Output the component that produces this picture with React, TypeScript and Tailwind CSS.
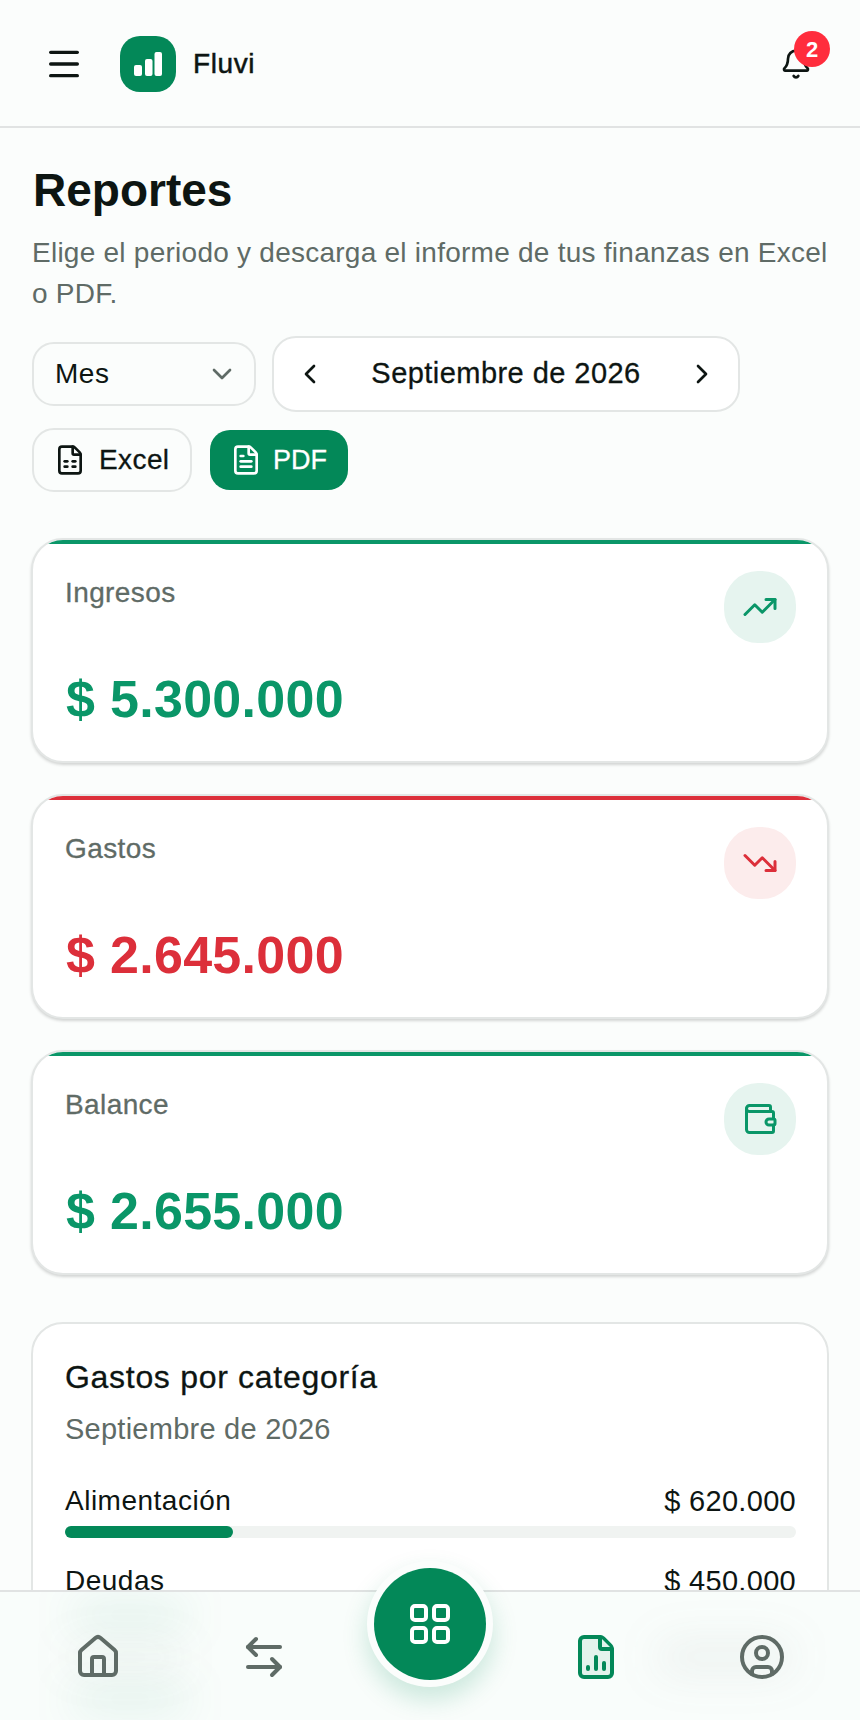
import { Menu, Bell, ChevronDown, ChevronLeft, ChevronRight, FileSpreadsheet, FileText, TrendingUp, TrendingDown, Wallet, House, ArrowLeftRight, FileChartColumn, CircleUser } from "lucide-react";
import type { ReactNode } from "react";

function StatCard({ label, value, top, tint, color, icon }: { label: string; value: string; top: string; tint: string; color: string; icon: ReactNode }) {
  return (
    <section className="relative -mx-[1px] h-[225px] overflow-hidden rounded-[32px] border-2 border-[#e3e6e5] bg-white shadow-[0_2px_3px_rgba(0,0,0,0.16)]">
      <div className={`h-[4px] ${top}`} />
      <div className="flex items-start justify-between pl-[32px] pr-[31px] pt-[27px]">
        <span className="pt-[4px] text-[28px] leading-[36px] tracking-[0.4px] text-[#5f6b66] [-webkit-text-stroke:0.3px]">{label}</span>
        <div className={`flex h-[72px] w-[72px] items-center justify-center rounded-[34px] ${tint}`}>{icon}</div>
      </div>
      <div className={`pl-[33px] pt-[25px] text-[52px] leading-[62px] font-bold tracking-[0.3px] ${color}`}>{value}</div>
    </section>
  );
}

function Row({ name, amount, width }: { name: string; amount: string; width: string }) {
  return (
    <div className="h-[80px]">
      <div className="flex justify-between text-[28px] leading-[40px] text-[#0d1512]">
        <span className="tracking-[0.5px]">{name}</span>
        <span className="text-[29px] tracking-[0.3px]">{amount}</span>
      </div>
      <div className="mt-[5px] h-[12px] rounded-full bg-[#f0f3f1]">
        <div className={`h-full rounded-full bg-[#038858] ${width}`} />
      </div>
    </div>
  );
}

export default function App() {
  return (
    <div className="relative h-[1720px] w-[860px] overflow-hidden bg-[#fbfdfc] font-['Liberation_Sans',sans-serif] text-[#0d1512]">
      <header className="flex h-[128px] items-center justify-between border-b-2 border-[#e1e3e3] pl-[44px] pr-[46px] pt-[2px]">
        <div className="flex items-center">
          <Menu size={40} strokeWidth={2} className="text-[#0d1512]" />
          <div className="ml-[36px] flex h-[56px] w-[56px] items-center justify-center rounded-[20px] bg-[#038858]">
            <svg width="28" height="24" viewBox="0 0 28 24" fill="#fff">
              <rect x="0" y="13" width="8" height="11" rx="2" />
              <rect x="11" y="7" width="7.5" height="17" rx="2" />
              <rect x="20.5" y="0" width="7.5" height="24" rx="2" />
            </svg>
          </div>
          <span className="ml-[17px] text-[28px] tracking-[0.6px] [-webkit-text-stroke:0.5px]">Fluvi</span>
        </div>
        <div className="relative flex h-[36px] w-[36px] items-center justify-center">
          <Bell size={32} strokeWidth={2} />
          <span className="absolute -right-[16px] -top-[15px] flex h-[36px] w-[36px] items-center justify-center rounded-full bg-[#ff2d3d] text-[22px] font-bold text-white">2</span>
        </div>
      </header>

      <main className="px-[32px] pt-[32px]">
        <h1 className="ml-[1px] text-[46px] leading-[60px] font-bold text-[#0d1512]">Reportes</h1>
        <p className="mt-[12px] text-[28px] leading-[41px] tracking-[0.25px] text-[#5f6b66]">Elige el periodo y descarga el informe de tus finanzas en Excel o PDF.</p>

        <div className="mt-[22px] flex items-center gap-[16px]">
          <div className="flex h-[64px] w-[224px] items-center justify-between rounded-[22px] border-2 border-[#e3e6e5] pl-[21px] pr-[16px] text-[28px] tracking-[0.5px]">
            <span>Mes</span>
            <ChevronDown size={32} strokeWidth={2} className="text-[#5f6b66]" />
          </div>
          <div className="flex h-[76px] w-[468px] items-center justify-between rounded-[24px] border-2 border-[#e3e6e5] bg-white px-[20px] text-[29px] tracking-[0.45px] [-webkit-text-stroke:0.3px]">
            <ChevronLeft size={32} strokeWidth={2} />
            <span>Septiembre de 2026</span>
            <ChevronRight size={32} strokeWidth={2} />
          </div>
        </div>

        <div className="mt-[16px] flex items-center gap-[18px]">
          <div className="flex h-[64px] w-[160px] items-center gap-[13px] rounded-[22px] border-2 border-[#e3e6e5] pl-[20px] text-[28px] tracking-[0.4px] [-webkit-text-stroke:0.3px]">
            <FileSpreadsheet size={32} strokeWidth={2} />
            <span>Excel</span>
          </div>
          <div className="flex h-[60px] w-[138px] items-center gap-[11px] rounded-[20px] bg-[#038858] pl-[20px] text-[27px] text-white [-webkit-text-stroke:0.3px]">
            <FileText size={32} strokeWidth={2} />
            <span>PDF</span>
          </div>
        </div>

        <div className="mt-[46px] flex flex-col gap-[31px]">
          <StatCard label="Ingresos" value="$ 5.300.000" top="bg-[#0a9668]" tint="bg-[#e6f4ef]" color="text-[#0a9668]" icon={<TrendingUp size={36} strokeWidth={2} className="text-[#0a9668]" />} />
          <StatCard label="Gastos" value="$ 2.645.000" top="bg-[#dc2f3a]" tint="bg-[#fcecec]" color="text-[#dc2f3a]" icon={<TrendingDown size={36} strokeWidth={2} className="text-[#dc2f3a]" />} />
          <StatCard label="Balance" value="$ 2.655.000" top="bg-[#0a9668]" tint="bg-[#e6f4ef]" color="text-[#0a9668]" icon={<Wallet size={36} strokeWidth={2} className="text-[#0a9668]" />} />
        </div>

        <section className="-mx-[1px] mt-[47px] rounded-[32px] border-2 border-[#e3e6e5] bg-white pb-[32px] pl-[32px] pr-[31px] pt-[33px]">
          <h2 className="text-[32px] leading-[40px] tracking-[0.7px] [-webkit-text-stroke:0.3px]">Gastos por categoría</h2>
          <p className="mt-[12px] text-[29px] leading-[40px] tracking-[0.25px] text-[#5f6b66]">Septiembre de 2026</p>
          <div className="mt-[32px]">
            <Row name="Alimentación" amount="$ 620.000" width="w-[23%]" />
            <Row name="Deudas" amount="$ 450.000" width="w-[17%]" />
          </div>
        </section>
      </main>

      <nav className="absolute inset-x-0 bottom-0 grid h-[130px] grid-cols-5 items-center justify-items-center overflow-hidden border-t-2 border-[#e1e3e3] bg-[#f9fdfb] px-[15px] pt-[2px]">
        <div className="absolute left-[70px] top-[8px] h-[30px] w-[120px] rounded-full bg-[#038858]/9 blur-[22px]" />
        <div className="absolute left-[65px] top-[50px] h-[30px] w-[120px] rounded-full bg-[#5f6b66]/6 blur-[22px]" />
        <div className="absolute left-[70px] top-[92px] h-[30px] w-[120px] rounded-full bg-[#038858]/9 blur-[22px]" />
        <div className="absolute left-[655px] top-[48px] h-[34px] w-[140px] rounded-full bg-[#5f6b66]/8 blur-[22px]" />
        <House size={48} strokeWidth={2} className="relative text-[#5f6b66]" />
        <ArrowLeftRight size={48} strokeWidth={2} className="relative text-[#5f6b66]" />
        <div />
        <FileChartColumn size={48} strokeWidth={2} className="relative text-[#038858]" fill="#e3f3ec" />
        <CircleUser size={48} strokeWidth={2} className="relative text-[#5f6b66]" />
      </nav>
      <div className="absolute bottom-[40px] left-[374px] flex h-[112px] w-[112px] items-center justify-center rounded-full bg-[#038858] shadow-[0_0_0_7px_#fbfdfc,0_12px_24px_8px_rgba(3,136,88,0.18)]">
        <svg width="48" height="48" viewBox="0 0 24 24" fill="none" stroke="#fff" strokeWidth="2">
          <rect x="3" y="3" width="7" height="7" rx="1.5" />
          <rect x="14" y="3" width="7" height="7" rx="1.5" />
          <rect x="3" y="14" width="7" height="7" rx="1.5" />
          <rect x="14" y="14" width="7" height="7" rx="1.5" />
        </svg>
      </div>
    </div>
  );
}
